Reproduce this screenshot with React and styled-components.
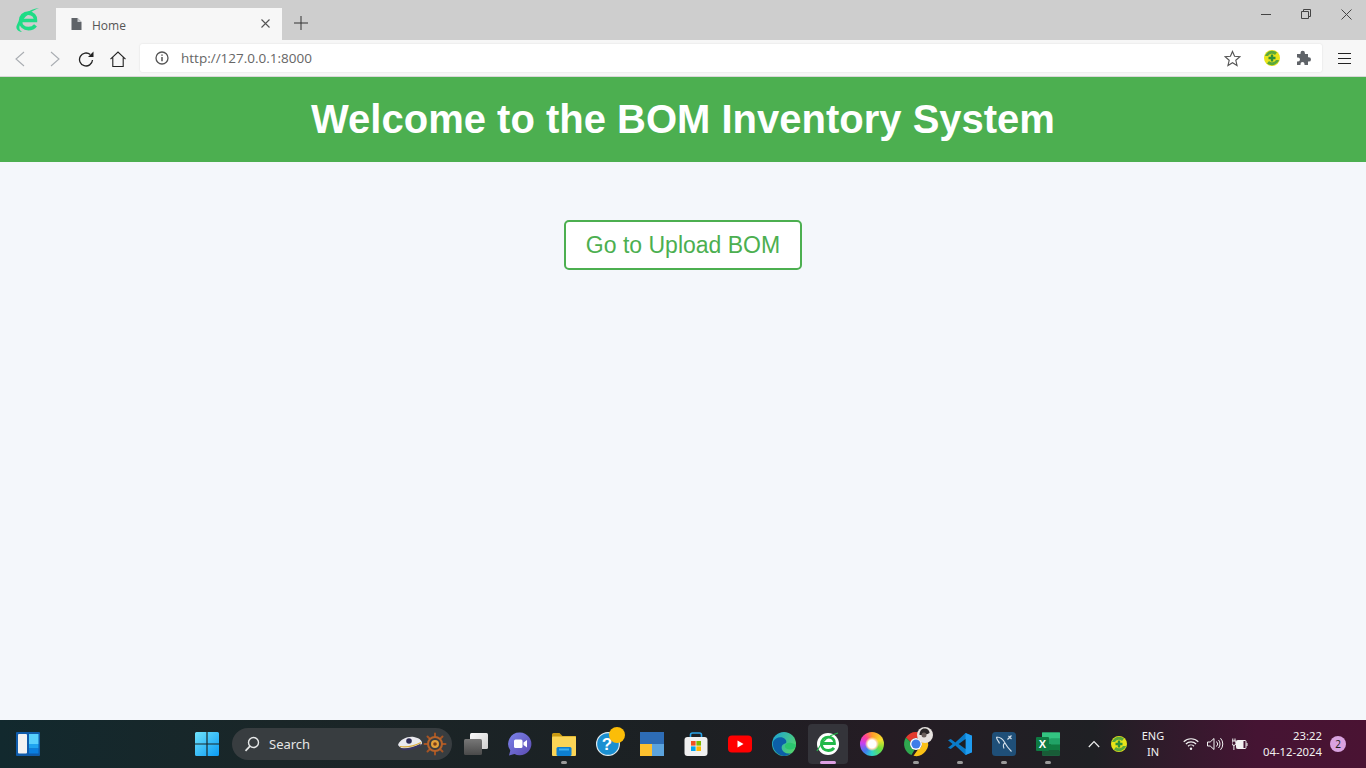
import React from "react";
import styled, { createGlobalStyle } from "styled-components";

const GlobalStyle = createGlobalStyle`
  html, body {
    margin: 0;
    padding: 0;
    height: 100%;
    overflow: hidden;
  }
  #root {
    height: 100%;
  }
`;

const LogoE = ({ size = 26, color = "#1fdc86" }) => (
  <svg width={size} height={size} viewBox="0 0 26 26" fill="none">
    <path d="M5 13.500h15.500c.4-4.400-2.700-7.400-7-7.400C8.800 6.100 5.500 9.500 5.500 14c0 4.600 3.400 7.600 8 7.600 3 0 5.400-1.200 7-3.300" stroke={color} strokeWidth="3.600" />
    <path d="M1.500 19C5 9 13 2.500 24 1c-8 3-15 8-19.500 18-.6 2.500.3 4.500 2.500 6C3 24.500.8 22 1.500 19z" fill={color} />
  </svg>
);

const WindowsLogo = () => (
  <svg width="24" height="24" viewBox="0 0 24 24">
    <defs>
      <linearGradient id="winGrad" x1="0" y1="0" x2="1" y2="1">
        <stop offset="0" stopColor="#6fe2fb" />
        <stop offset="1" stopColor="#0a9bf5" />
      </linearGradient>
    </defs>
    <path fill="url(#winGrad)" d="M0 1.500A1.500 1.500 0 0 1 1.500 0H11.400V11.400H0zM12.600 0H22.500A1.500 1.500 0 0 1 24 1.500V11.400H12.600zM0 12.600H11.400V24H1.500A1.500 1.500 0 0 1 0 22.500zM12.600 12.600H24V22.500A1.500 1.500 0 0 1 22.500 24H12.600z" />
  </svg>
);

const WidgetsIcon = () => (
  <svg width="24" height="24" viewBox="0 0 24 24">
    <rect width="24" height="24" rx="1" fill="#0f5cab" />
    <rect x="2" y="2" width="9" height="19.500" rx="1" fill="#f2f2f2" />
    <rect x="13" y="2" width="9.500" height="10" fill="#58d0fd" />
    <rect x="13" y="12" width="9.500" height="4.500" fill="#1fa3ef" />
    <rect x="13" y="16.500" width="9.500" height="5" fill="#0a7fe0" />
  </svg>
);

const SearchGlass = () => (
  <svg width="16" height="16" viewBox="0 0 16 16" fill="none" stroke="#e6e8e8" strokeWidth="1.400">
    <circle cx="9.500" cy="6.500" r="5" />
    <path d="M6 10.200 1.500 14.800" strokeWidth="1.700" />
  </svg>
);

const CaptainHat = () => (
  <svg width="26" height="18" viewBox="0 0 26 18">
    <path d="M1 10C3 4 11 1 17 2c5 .8 8 3.500 8 6 0 2-3 3-8 4.500C11 14.500 4 15 1 10z" fill="#e9e9ee" />
    <path d="M3 13c6 1 14-.5 21-4.500l-1 3c-5 3-13 4.500-18 3.500z" fill="#3a3560" />
    <path d="M3 11.500c6 1.200 14-.5 21-4" stroke="#d8a93a" strokeWidth="1.200" fill="none" />
    <circle cx="12" cy="6" r="2.800" fill="#2d2b55" />
  </svg>
);

const ShipWheel = () => (
  <svg width="24" height="24" viewBox="0 0 24 24" fill="none">
    <g stroke="#a55424" strokeWidth="2" strokeLinecap="round">
      <path d="M12 1.500v21M1.500 12h21M4.500 4.500l15 15M19.500 4.500l-15 15" />
    </g>
    <circle cx="12" cy="12" r="7" stroke="#b5622a" strokeWidth="2" fill="#3a3d3f" />
    <circle cx="12" cy="12" r="4" fill="#e2a23a" />
    <circle cx="12" cy="12" r="1.800" fill="#7a3d17" />
  </svg>
);

const TaskViewIcon = () => (
  <svg width="24" height="22" viewBox="0 0 24 22">
    <defs>
      <linearGradient id="taskBack" x1="0" y1="0" x2="1" y2="1">
        <stop offset="0" stopColor="#fafafa" />
        <stop offset="1" stopColor="#cfcfcf" />
      </linearGradient>
      <linearGradient id="taskFront" x1="0" y1="0" x2="0" y2="1">
        <stop offset="0" stopColor="#777" />
        <stop offset="1" stopColor="#4a4a4a" />
      </linearGradient>
    </defs>
    <rect x="6" y="0" width="18" height="16" rx="1.500" fill="url(#taskBack)" />
    <rect x="0" y="6" width="18" height="16" rx="1.500" fill="url(#taskFront)" />
  </svg>
);

const MeetIcon = () => (
  <svg width="24" height="24" viewBox="0 0 24 24">
    <defs>
      <linearGradient id="meetGrad" x1="0" y1="0" x2="1" y2="1">
        <stop offset="0" stopColor="#7b83eb" />
        <stop offset="1" stopColor="#5b4ab0" />
      </linearGradient>
    </defs>
    <path fill="url(#meetGrad)" d="M12 .500a11.400 11.400 0 1 1-5.500 21.400L1 23.500l1.300-5A11.400 11.400 0 0 1 12 .500z" />
    <rect x="6" y="7.500" width="8.500" height="8.500" rx="1.500" fill="#fff" />
    <path d="M15.500 10.500 19 8v7.500l-3.500-2.500z" fill="#fff" />
  </svg>
);

const FolderIcon = () => (
  <svg width="24" height="24" viewBox="0 0 24 24">
    <path d="M0 2.500A1.500 1.500 0 0 1 1.500 1h6l3 3H24v4H0z" fill="#c99a12" />
    <rect x="0" y="4.500" width="24" height="19.500" rx="1" fill="#fbd556" />
    <rect x="4.500" y="15" width="15" height="9" rx="1.500" fill="#0d7fd0" />
    <rect x="7" y="16.500" width="10" height="2" fill="#3fb0ee" />
  </svg>
);

const HelpIcon = () => (
  <OverflowSvg width="24" height="24" viewBox="0 0 24 24">
    <circle cx="12" cy="12" r="11.400" fill="#1a8fd1" stroke="#dfe9ee" strokeWidth="1.200" />
    <text x="11" y="18" textAnchor="middle" fontFamily="Liberation Sans, sans-serif" fontWeight="700" fontSize="17" fill="#fff">?</text>
    <circle cx="21" cy="3" r="8" fill="#fbbd08" />
  </OverflowSvg>
);

const TilesIcon = () => (
  <svg width="24" height="24" viewBox="0 0 24 24">
    <rect width="24" height="12" fill="#2d6cb5" />
    <rect y="12" width="12" height="12" fill="#fcc02e" />
    <rect x="12" y="12" width="12" height="12" fill="#5ba3dc" />
  </svg>
);

const StoreIcon = () => (
  <svg width="24" height="24" viewBox="0 0 24 24" fill="none">
    <path d="M6.500 7V3a2 2 0 0 1 2-2h7a2 2 0 0 1 2 2v4" stroke="#2aa3e8" strokeWidth="1.600" />
    <rect x="0.500" y="5" width="23" height="19" rx="3" fill="#f0f0f0" />
    <rect x="7" y="9" width="4.600" height="4.600" fill="#f25022" />
    <rect x="12.400" y="9" width="4.600" height="4.600" fill="#7fba00" />
    <rect x="7" y="14.400" width="4.600" height="4.600" fill="#00a4ef" />
    <rect x="12.400" y="14.400" width="4.600" height="4.600" fill="#ffb900" />
  </svg>
);

const YoutubeIcon = () => (
  <svg width="24" height="18" viewBox="0 0 24 18">
    <rect width="24" height="17" y="0.500" rx="4" fill="#f00" />
    <path d="M9.500 5.500v7l6-3.500z" fill="#fff" />
  </svg>
);

const EdgeIcon = () => (
  <svg width="24" height="24" viewBox="0 0 24 24">
    <defs>
      <linearGradient id="edgeGrad" x1="0" y1="0" x2="1" y2="0.600">
        <stop offset="0" stopColor="#1ba0da" />
        <stop offset="1" stopColor="#52d36e" />
      </linearGradient>
    </defs>
    <circle cx="12" cy="12" r="12" fill="url(#edgeGrad)" />
    <path d="M1 10c2-5 9-6 12-3 2 2 1.500 4 0 4.500-3 1-4 3-3 6 1 3 5 5 9.500 3.500-3 2.500-7 3.500-10 2.500C4 22 0 16 1 10z" fill="#0c5fa8" />
    <path d="M24 13c-.5 3-2.500 4.500-6 4.500-2.500 0-4.500-1-5-2.500-.5-2 1-3.500 3-4 3-.8 6 .5 8 2z" fill="#2bc66f" />
  </svg>
);

const AppE = () => (
  <svg width="24" height="24" viewBox="0 0 24 24" fill="none">
    <circle cx="12" cy="12" r="11" fill="#fff" />
    <path d="M5 11.500h13.500c.3-4-2.500-6.300-6.200-6.300C8.300 5.200 5.500 8 5.500 12c0 4 2.800 6.500 6.800 6.500 2.500 0 4.400-1 5.700-2.700" stroke="#22b84a" strokeWidth="2.800" />
    <path d="M1 19 C6 9 13 3 22 1" stroke="#22b84a" strokeWidth="1.200" />
  </svg>
);

const ChromeIcon = () => (
  <OverflowSvg width="24" height="24" viewBox="0 0 24 24">
    <path d="M12 0a12 12 0 0 1 10.400 6H12a6 6 0 0 0-5.600 3.800L1.900 5.600A12 12 0 0 1 12 0z" fill="#e33b2e" />
    <path d="M1.900 5.600 6.400 10a6 6 0 0 0 4.200 7.800L7.500 23.100A12 12 0 0 1 1.900 5.600z" fill="#2fa84f" />
    <path d="M22.400 6A12 12 0 0 1 9.500 23.800L14 17.600A6 6 0 0 0 16 7.500z" fill="#fbc116" />
    <circle cx="12" cy="12" r="6" fill="#fff" />
    <circle cx="12" cy="12" r="4.600" fill="#3f7de8" />
    <circle cx="21" cy="3" r="8" fill="#e6e2df" />
    <path d="M15.500 3c0-4 2-6.500 5-6.500s5 2 5 4.500c-2 1.500-6 2-10 2z" fill="#2a2627" />
    <circle cx="20" cy="3" r="2.500" fill="#6a5f5b" />
  </OverflowSvg>
);

const VSCodeIcon = () => (
  <svg width="24" height="24" viewBox="0 0 26 24">
    <path d="M19 0 26 3v18l-7 3L8 13.500 3 17.500 0 16l5-4-5-4 3-1.500 5 4z" fill="#0a7cc9" />
    <path d="M19 0 26 3v18l-7 3z" fill="#1f9cf0" />
    <path d="M19 6.500 11.500 12 19 17.500z" fill="#1d2024" />
  </svg>
);

const MysqlIcon = () => (
  <svg width="24" height="24" viewBox="0 0 24 24" fill="none">
    <rect width="24" height="24" rx="3.500" fill="#1f4f78" />
    <path d="M4.500 5c3.500 0 6.500 2 8.500 6 1 2 3 5 6.500 8.500M4.500 5c0 3 2 3.500 3 6.500M13 11c-2 1-2 3-1 5.500M19.500 3.500 15.500 7.500M16.500 4l3 3" stroke="#d5e0ea" strokeWidth="1.100" />
  </svg>
);

const ExcelIcon = () => (
  <svg width="24" height="24" viewBox="0 0 24 24">
    <rect x="6" y="0.500" width="18" height="23" rx="1" fill="#21a366" />
    <rect x="6" y="0.500" width="18" height="6" fill="#33c481" />
    <rect x="15" y="6.500" width="9" height="6" fill="#21a366" />
    <rect x="6" y="12" width="9" height="6" fill="#107c41" />
    <rect x="15" y="12.500" width="9" height="5.500" fill="#107c41" />
    <rect x="6" y="18" width="18" height="5.500" rx="1" fill="#185c37" />
    <rect x="0" y="5" width="13" height="14" rx="1" fill="#0e7a42" />
    <text x="6.500" y="16" textAnchor="middle" fontFamily="Liberation Sans, sans-serif" fontWeight="700" fontSize="11" fill="#fff">X</text>
  </svg>
);

const GreenPlus = ({ size = 16 }) => (
  <svg width={size} height={size} viewBox="0 0 16 16">
    <circle cx="8" cy="8" r="8" fill="#e8e41a" />
    <path d="M1 6A7.500 7.500 0 0 1 13 2.500L11 5A4.500 4.500 0 0 0 4 6zM15 10A7.500 7.500 0 0 1 3 13.500L5 11A4.500 4.500 0 0 0 12 10z" fill="#5aa83c" />
    <path d="M6.800 4.500h2.400v2.300h2.300v2.400H9.200v2.300H6.800V9.200H4.500V6.800h2.300z" fill="#2f8f3a" />
  </svg>
);

const BackIcon = ({ flip }) => (
  <svg width="14" height="16" viewBox="0 0 14 16" fill="none" stroke="#a9adb2" strokeWidth="1.100">
    <path d={flip ? "M3 1l8 7-8 7" : "M11 1 3 8l8 7"} />
  </svg>
);

const ReloadIcon = () => (
  <svg width="16" height="16" viewBox="0 0 16 16" fill="none" stroke="#222" strokeWidth="1.300">
    <path d="M14.500 9a6.500 6.500 0 1 1-2.200-5.400" />
    <path d="M15.500 .5v5.500h-5.500z" fill="#222" stroke="none" />
  </svg>
);

const HomeIcon = () => (
  <svg width="16" height="16" viewBox="0 0 16 16" fill="none" stroke="#222" strokeWidth="1.100">
    <path d="M.5 8.200 8 1l7.500 7.200M2.800 6.500v9h10.400v-9" />
  </svg>
);

const InfoIcon = () => (
  <svg width="14" height="14" viewBox="0 0 14 14" fill="none" stroke="#555" strokeWidth="1.300">
    <circle cx="7" cy="7" r="6" />
    <path d="M7 6v4.200M7 3.400v1.400" strokeWidth="1.500" />
  </svg>
);

const DocIcon = () => (
  <svg width="11" height="12" viewBox="0 0 11 12">
    <path d="M0.500 0H6.500L10.500 4V12H0.500z" fill="#5f6368" />
    <path d="M6.500 0V4H10.500z" fill="#c9cbce" />
  </svg>
);

const StarIcon = () => (
  <svg width="17" height="17" viewBox="0 0 18 18" fill="none" stroke="#555" strokeWidth="1.200">
    <path d="M9 1.500 11.200 6.700l5.600.5-4.300 3.700 1.300 5.500L9 13.500l-4.800 2.900 1.300-5.500L1.200 7.200l5.600-.5z" />
  </svg>
);

const PuzzleIcon = () => (
  <svg width="16" height="16" viewBox="0 0 16 16">
    <path d="M1 4h3.500V3a2.200 2.200 0 0 1 4.400 0v1h3.100v3.200h.8a2.200 2.200 0 0 1 0 4.400H12V15H8.500v-1a2 2 0 0 0-4 0v1H1v-3.500h1a2 2 0 0 0 0-4H1z" fill="#5f6368" />
  </svg>
);

const WifiIcon = () => (
  <svg width="16" height="14" viewBox="0 0 16 14" fill="none" stroke="#f2f2f2" strokeWidth="1.200">
    <path d="M.7 4.700a10.500 10.500 0 0 1 14.600 0M2.900 7a7.300 7.300 0 0 1 10.200 0M5 9.200a4.300 4.300 0 0 1 6 0" />
    <circle cx="8" cy="11.800" r="1.200" fill="#f2f2f2" stroke="none" />
  </svg>
);

const VolumeIcon = () => (
  <svg width="17" height="14" viewBox="0 0 17 14" fill="none" stroke="#f2f2f2" strokeWidth="1">
    <path d="M.5 5h2.700L7 1.500v11L3.200 9H.5zM9.500 4.500a3.500 3.500 0 0 1 0 5M11.500 3a6 6 0 0 1 0 8M13.500 1.200a8.500 8.500 0 0 1 0 11.600" />
  </svg>
);

const BatteryIcon = () => (
  <svg width="16" height="13" viewBox="0 0 16 13" fill="none" stroke="#f2f2f2" strokeWidth="1">
    <path d="M.8 .5v2.500M3 .5v2.500M0 3h3.800v2.500a1.900 1.900 0 0 1-3.800 0zM1.900 7v5" />
    <rect x="4.500" y="2.500" width="9.500" height="8" rx="1" />
    <rect x="4.500" y="2.500" width="7" height="8" fill="#f2f2f2" stroke="none" />
    <path d="M15 5v3" />
  </svg>
);

const App = () => {
  const dockApps = [
    { icon: <TaskViewIcon /> },
    { icon: <MeetIcon /> },
    { icon: <FolderIcon />, dot: true },
    { icon: <HelpIcon /> },
    { icon: <TilesIcon /> },
    { icon: <StoreIcon /> },
    { icon: <YoutubeIcon /> },
    { icon: <EdgeIcon /> },
    { icon: <AppE />, active: true },
    { icon: <ColorRing /> },
    { icon: <ChromeIcon />, dot: true },
    { icon: <VSCodeIcon />, dot: true },
    { icon: <MysqlIcon />, dot: true },
    { icon: <ExcelIcon />, dot: true },
  ];

  return (
    <Screen>
      <GlobalStyle />
      <TitleBar>
        <TabLogo>
          <LogoE />
        </TabLogo>
        <Tab>
          <DocIcon />
          <TabTitle>Home</TabTitle>
          <TabClose>
            <svg width="9" height="9" viewBox="0 0 9 9" stroke="#555" strokeWidth="1.100">
              <path d="M.5.500l8 8M8.500.500l-8 8" />
            </svg>
          </TabClose>
        </Tab>
        <NewTab>
          <svg width="14" height="14" viewBox="0 0 14 14" stroke="#333" strokeWidth="1">
            <path d="M7 0v14M0 7h14" />
          </svg>
        </NewTab>
        <WindowControls>
          <WindowButton>
            <svg width="10" height="10" viewBox="0 0 10 10" stroke="#444">
              <path d="M0 5.500h10" />
            </svg>
          </WindowButton>
          <WindowButton>
            <svg width="10" height="10" viewBox="0 0 10 10" fill="none" stroke="#444">
              <path d="M.5 2.500h7v7h-7zM2.500 2.500v-2h7v7h-2" />
            </svg>
          </WindowButton>
          <WindowButton>
            <svg width="11" height="11" viewBox="0 0 11 11" stroke="#444">
              <path d="M.5.500l10 10M10.500.500l-10 10" />
            </svg>
          </WindowButton>
        </WindowControls>
      </TitleBar>

      <Toolbar>
        <NavButton $w={34}>
          <BackIcon />
        </NavButton>
        <NavButton $w={36}>
          <BackIcon flip />
        </NavButton>
        <NavButton $w={26}>
          <ReloadIcon />
        </NavButton>
        <NavButton $w={38}>
          <HomeIcon />
        </NavButton>
        <AddressBar>
          <InfoIcon />
          <Url>http://127.0.0.1:8000</Url>
          <AddressActions>
            <StarSlot>
              <StarIcon />
            </StarSlot>
            <GreenPlus />
            <PuzzleIcon />
          </AddressActions>
        </AddressBar>
        <MenuButton>
          <svg width="13" height="11" viewBox="0 0 13 11" stroke="#222">
            <path d="M0 .500h13M0 5.500h13M0 10.500h13" />
          </svg>
        </MenuButton>
      </Toolbar>

      <Page>
        <Banner>
          <Heading>Welcome to the BOM Inventory System</Heading>
        </Banner>
        <Content>
          <UploadLink href="#">Go to Upload BOM</UploadLink>
        </Content>
      </Page>

      <Taskbar>
        <WidgetSlot>
          <WidgetsIcon />
        </WidgetSlot>
        <StartSlot>
          <WindowsLogo />
        </StartSlot>
        <SearchBox>
          <SearchGlass />
          <SearchLabel>Search</SearchLabel>
          <SearchArt>
            <CaptainHat />
            <ShipWheel />
          </SearchArt>
        </SearchBox>
        <Dock>
          {dockApps.map((app, i) => (
            <DockItem key={i} $active={app.active}>
              {app.icon}
              {app.dot && <RunDot />}
              {app.active && <ActiveBar />}
            </DockItem>
          ))}
        </Dock>
        <Tray>
          <TrayChevron>
            <svg width="12" height="8" viewBox="0 0 12 8" fill="none" stroke="#eee" strokeWidth="1.200">
              <path d="M.8 7 6 1.500 11.200 7" />
            </svg>
          </TrayChevron>
          <GreenPlus />
          <Lang>
            <span>ENG</span>
            <span>IN</span>
          </Lang>
          <StatusIcons>
            <WifiIcon />
            <VolumeIcon />
            <BatteryIcon />
          </StatusIcons>
          <Clock>
            <span>23:22</span>
            <span>04-12-2024</span>
          </Clock>
          <Badge>2</Badge>
        </Tray>
      </Taskbar>
    </Screen>
  );
};

export default App;

const Screen = styled.div`
  display: flex;
  flex-direction: column;
  width: 1366px;
  height: 768px;
  overflow: hidden;
`;

const OverflowSvg = styled.svg`
  overflow: visible;
`;

const ColorRing = styled.span`
  display: block;
  width: 24px;
  height: 24px;
  border-radius: 50%;
  background: radial-gradient(circle, #fff 0 4px, #ffd9b0 5px, transparent 7px),
    conic-gradient(#ff9a2a, #f7e02e 18%, #6fe03a 33%, #2fd6c8 50%, #3f7df0 62%, #c63ff0 76%, #ff3f9a 88%, #ff9a2a);
  filter: blur(0.6px);
`;

const TitleBar = styled.div`
  display: flex;
  align-items: flex-end;
  height: 40px;
  flex: none;
  background: #cecece;
`;

const TabLogo = styled.div`
  display: flex;
  align-items: center;
  justify-content: center;
  width: 56px;
  height: 40px;
  box-sizing: border-box;
`;

const Tab = styled.div`
  display: flex;
  align-items: center;
  width: 226px;
  height: 32px;
  padding: 0 11px 0 15px;
  box-sizing: border-box;
  background: #f7f7f7;
`;

const TabTitle = styled.span`
  flex: 1;
  margin-left: 10px;
  padding-top: 2px;
  font: 12px "Open Sans", sans-serif;
  color: #555;
`;

const TabClose = styled.span`
  display: flex;
  margin-top: -1px;
  margin-right: 1px;
`;

const NewTab = styled.div`
  display: flex;
  align-items: center;
  justify-content: center;
  width: 38px;
  height: 32px;
  margin-bottom: 1px;
`;

const WindowControls = styled.div`
  display: flex;
  align-self: flex-start;
  margin-left: auto;
`;

const WindowButton = styled.div`
  display: flex;
  align-items: center;
  justify-content: center;
  width: 40px;
  height: 28px;
`;

const Toolbar = styled.div`
  display: flex;
  align-items: center;
  height: 37px;
  flex: none;
  box-sizing: border-box;
  padding-left: 3px;
  background: #f7f7f7;
  border-bottom: 1px solid #d8d8d8;
`;

const NavButton = styled.div`
  display: flex;
  align-items: center;
  justify-content: center;
  width: ${(p) => p.$w}px;
  height: 28px;
  margin-top: 1px;
`;

const AddressBar = styled.div`
  display: flex;
  align-items: center;
  width: 1182px;
  height: 28px;
  margin-left: 3px;
  padding: 0 15px;
  box-sizing: border-box;
  background: #fff;
  border-radius: 2px;
  box-shadow: 0 0 2px rgba(0, 0, 0, 0.12);
`;

const Url = styled.span`
  margin-left: 12px;
  font: 13.5px "Open Sans", sans-serif;
  color: #666;
`;

const AddressActions = styled.div`
  display: flex;
  align-items: center;
  gap: 16px;
  margin-left: auto;
  margin-right: -5px;
`;

const StarSlot = styled.span`
  display: flex;
  margin-right: 7px;
`;

const MenuButton = styled.div`
  display: flex;
  align-items: center;
  justify-content: center;
  width: 44px;
`;

const Page = styled.main`
  display: flex;
  flex: 1;
  flex-direction: column;
  background: #f4f7fb;
`;

const Banner = styled.header`
  padding: 20px 0;
  background: #4caf50;
  text-align: center;
`;

const Heading = styled.h1`
  margin: 0;
  font: 700 40px/45px "Liberation Sans", Arial, sans-serif;
  color: #fff;
`;

const Content = styled.div`
  display: flex;
  justify-content: center;
  padding-top: 58px;
`;

const UploadLink = styled.a`
  padding: 10px 20px;
  background: #fff;
  border: 2px solid #4caf50;
  border-radius: 5px;
  font: 23px/26px "Liberation Sans", Arial, sans-serif;
  color: #4caf50;
  text-decoration: none;
`;

const Taskbar = styled.footer`
  display: flex;
  align-items: center;
  height: 48px;
  flex: none;
  background: linear-gradient(90deg, #12292e 0%, #1a2628 20%, #1c2023 50%, #251c24 65%, #1f2024 80%, #451433 92%, #4a1333 100%);
  font-family: "Noto Sans", "Open Sans", sans-serif;
  color: #f2f2f2;
`;

const WidgetSlot = styled.div`
  display: flex;
  width: 184px;
  padding-left: 16px;
  box-sizing: border-box;
  flex: none;
`;

const StartSlot = styled.div`
  display: flex;
  align-items: center;
  justify-content: center;
  width: 44px;
  margin-left: 1px;
  flex: none;
`;

const SearchBox = styled.div`
  display: flex;
  align-items: center;
  width: 220px;
  height: 32px;
  margin: 0 2px 0 3px;
  padding: 0 0 0 12px;
  box-sizing: border-box;
  background: #383d40;
  border-radius: 16px;
  flex: none;
`;

const SearchLabel = styled.span`
  margin-left: 9px;
  font-size: 13px;
  color: #e6e6e6;
`;

const SearchArt = styled.div`
  display: flex;
  align-items: center;
  margin-left: auto;
  margin-right: 5px;
`;

const Dock = styled.div`
  display: flex;
  flex: none;
`;

const DockItem = styled.div`
  position: relative;
  display: flex;
  align-items: center;
  justify-content: center;
  width: 40px;
  height: 40px;
  margin: 0 2px;
  border-radius: 4px;
  background: ${(p) => (p.$active ? "#34343a" : "transparent")};
`;

const RunDot = styled.span`
  position: absolute;
  bottom: 0;
  left: 17px;
  width: 6px;
  height: 3px;
  border-radius: 2px;
  background: #9a9a9a;
`;

const ActiveBar = styled.span`
  position: absolute;
  bottom: 0;
  left: 12px;
  width: 16px;
  height: 3px;
  border-radius: 2px;
  background: #dda0e4;
`;

const Tray = styled.div`
  display: flex;
  align-items: center;
  flex: 1;
  padding-left: 18px;
`;

const TrayChevron = styled.span`
  display: flex;
  margin-right: 11px;
`;

const Lang = styled.div`
  display: flex;
  flex-direction: column;
  align-items: center;
  width: 30px;
  margin-left: 11px;
  font-size: 11px;
  line-height: 16px;
`;

const StatusIcons = styled.div`
  display: flex;
  align-items: center;
  gap: 8px;
  margin-left: 15px;
`;

const Clock = styled.div`
  display: flex;
  flex-direction: column;
  align-items: flex-end;
  width: 67px;
  margin-left: 7px;
  font-size: 11.3px;
  line-height: 16px;
`;

const Badge = styled.span`
  display: flex;
  align-items: center;
  justify-content: center;
  width: 16px;
  height: 16px;
  margin-left: 8px;
  border-radius: 50%;
  background: #d9a3e0;
  font-size: 10px;
  color: #222;
`;
